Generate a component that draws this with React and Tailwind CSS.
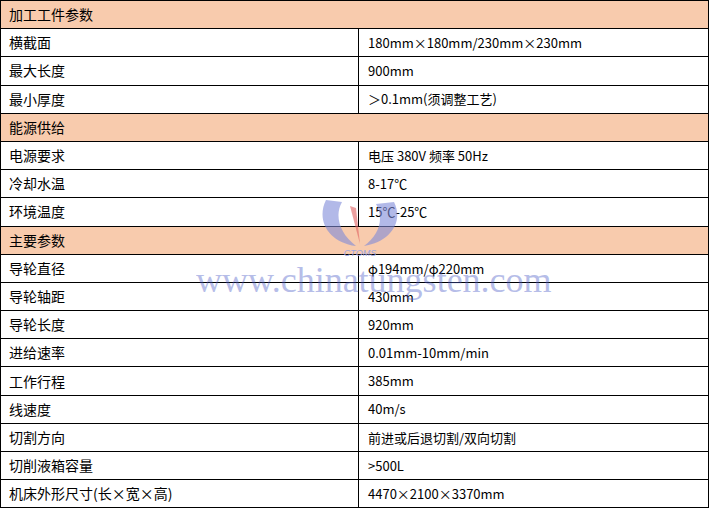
export default function App() {
  const rows = [
    ["h", "加工工件参数"],
    ["横截面", "180mm×180mm/230mm×230mm"],
    ["最大长度", "900mm"],
    ["最小厚度", "＞0.1mm(须调整工艺)"],
    ["h", "能源供给"],
    ["电源要求", "电压 380V  频率 50Hz"],
    ["冷却水温", "8-17℃"],
    ["环境温度", "15℃-25℃"],
    ["h", "主要参数"],
    ["导轮直径", "φ194mm/φ220mm"],
    ["导轮轴距", "430mm"],
    ["导轮长度", "920mm"],
    ["进给速率", "0.01mm-10mm/min"],
    ["工作行程", "385mm"],
    ["线速度", "40m/s"],
    ["切割方向", "前进或后退切割/双向切割"],
    ["切削液箱容量", ">500L"],
    ["机床外形尺寸(长×宽×高)", "4470×2100×3370mm"],
  ];
  return (
    <div className="relative w-[710px] h-[508px] bg-white overflow-hidden text-[14px] text-black" style={{ fontFamily: '"Noto Sans CJK SC", sans-serif' }}>
      <div className="border-l border-t border-r border-black w-[709px]">
        {rows.map((r, i) =>
          r[0] === "h" ? (
            <div key={i} className="h-[28.2px] bg-[#f8cbad] border-b border-black flex items-center pl-[8px]">{r[1]}</div>
          ) : (
            <div key={i} className="h-[28.2px] border-b border-black flex">
              <div className="w-[358px] border-r border-black flex items-center pl-[8px]">{r[0]}</div>
              <div className="flex-1 flex items-center pl-[9px] text-[13px]">{r[1]}</div>
            </div>
          )
        )}
      </div>
      <svg className="absolute left-[318px] top-[198px]" width="84" height="60" viewBox="0 0 84 60">
        <path d="M8 2 C-2 22 10 44 38 48 C22 36 16 18 24 4 Z" fill="#7f8ad8" opacity="0.6" />
        <path d="M76 4 C86 24 72 44 46 48 C62 36 66 20 58 6 Z" fill="#7f8ad8" opacity="0.6" />
        <path d="M32 8 L42 46 L38 10 Z" fill="#e06060" opacity="0.6" />
        <text x="42" y="58" textAnchor="middle" fontSize="9" fontStyle="italic" fill="#9aa4e0" fontFamily="Liberation Sans">CTOMS</text>
      </svg>
      <div className="absolute left-[196px] top-[262px] text-[36px] text-[#4a5cc8] opacity-40 leading-none" style={{ fontFamily: '"Liberation Serif", serif' }}>
        www.chinatungsten.com
      </div>
    </div>
  );
}
